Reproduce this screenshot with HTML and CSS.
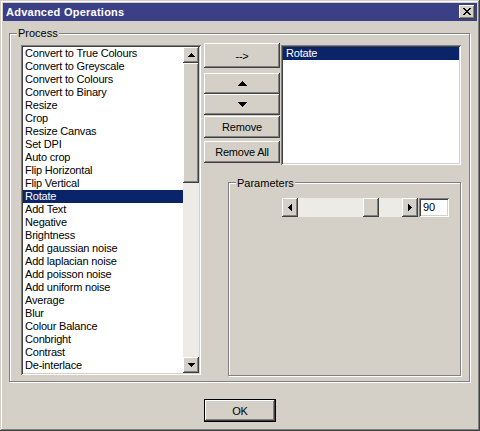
FILE: index.html
```html
<!DOCTYPE html>
<html>
<head>
<meta charset="utf-8">
<link rel="stylesheet" href="styles.css">
</head>
<body>
<div class="window">
  <div class="titlebar">
    <span class="title">Advanced Operations</span>
    <div class="close raised">
      <svg width="8" height="7" viewBox="0 0 8 7" shape-rendering="crispEdges">
        <rect x="0" y="0" width="2" height="1"/><rect x="6" y="0" width="2" height="1"/>
        <rect x="1" y="1" width="2" height="1"/><rect x="5" y="1" width="2" height="1"/>
        <rect x="2" y="2" width="4" height="1"/>
        <rect x="3" y="3" width="2" height="1"/>
        <rect x="2" y="4" width="4" height="1"/>
        <rect x="1" y="5" width="2" height="1"/><rect x="5" y="5" width="2" height="1"/>
        <rect x="0" y="6" width="2" height="1"/><rect x="6" y="6" width="2" height="1"/>
      </svg>
    </div>
  </div>

  <div class="group process">
    <span class="legend">Process</span>
    <div class="process-inner">
      <div class="sunken left-list">
        <ul class="items">
          <li>Convert to True Colours</li>
          <li>Convert to Greyscale</li>
          <li>Convert to Colours</li>
          <li>Convert to Binary</li>
          <li>Resize</li>
          <li>Crop</li>
          <li>Resize Canvas</li>
          <li>Set DPI</li>
          <li>Auto crop</li>
          <li>Flip Horizontal</li>
          <li>Flip Vertical</li>
          <li class="selected">Rotate</li>
          <li>Add Text</li>
          <li>Negative</li>
          <li>Brightness</li>
          <li>Add gaussian noise</li>
          <li>Add laplacian noise</li>
          <li>Add poisson noise</li>
          <li>Add uniform noise</li>
          <li>Average</li>
          <li>Blur</li>
          <li>Colour Balance</li>
          <li>Conbright</li>
          <li>Contrast</li>
          <li>De-interlace</li>
        </ul>
        <div class="vscroll">
          <div class="sbtn raised">
            <svg width="7" height="4" viewBox="0 0 7 4" shape-rendering="crispEdges"><polygon points="3.5,0 7,4 0,4"/></svg>
          </div>
          <div class="vtrack">
            <div class="vthumb raised"></div>
          </div>
          <div class="sbtn raised">
            <svg width="7" height="4" viewBox="0 0 7 4" shape-rendering="crispEdges"><polygon points="0,0 7,0 3.5,4"/></svg>
          </div>
        </div>
      </div>

      <div class="right-area">
        <div class="top-row">
          <div class="btn-col">
            <div class="btn raised b-add">--&gt;</div>
            <div class="btn raised b-up">
              <svg width="9" height="5" viewBox="0 0 9 5" shape-rendering="crispEdges"><polygon points="4.5,0 9,5 0,5"/></svg>
            </div>
            <div class="btn raised b-down">
              <svg width="9" height="5" viewBox="0 0 9 5" shape-rendering="crispEdges"><polygon points="0,0 9,0 4.5,5"/></svg>
            </div>
            <div class="btn raised b-remove">Remove</div>
            <div class="btn raised b-removeall">Remove All</div>
          </div>
          <div class="sunken right-list">
            <ul class="items">
              <li class="selected">Rotate</li>
            </ul>
          </div>
        </div>

        <div class="group params">
          <span class="legend">Parameters</span>
          <div class="params-inner">
            <div class="hscroll">
              <div class="sbtn raised">
                <svg width="4" height="7" viewBox="0 0 4 7" shape-rendering="crispEdges"><polygon points="0,3.5 4,0 4,7"/></svg>
              </div>
              <div class="htrack">
                <div class="hthumb raised" style="margin-left:65px"></div>
              </div>
              <div class="sbtn raised">
                <svg width="4" height="7" viewBox="0 0 4 7" shape-rendering="crispEdges"><polygon points="0,0 4,3.5 0,7"/></svg>
              </div>
            </div>
            <div class="sunken edit">90</div>
          </div>
        </div>
      </div>
    </div>
  </div>

  <div class="footer">
    <div class="ok">
      <div class="btn raised ok-face">OK</div>
    </div>
  </div>
</div>
</body>
</html>
```

FILE: styles.css
```css
* { box-sizing: border-box; }

html, body {
  margin: 0;
  padding: 0;
}

body {
  background: #d4d0c8;
  font-family: "Liberation Sans", Arial, sans-serif;
  font-size: 11px;
  color: #000;
}

.window {
  width: 480px;
  height: 431px;
  padding: 3px;
  background: #d4d0c8;
  display: flex;
  flex-direction: column;
  box-shadow: inset -1px -1px 0 #404040, inset 1px 1px 0 #d4d0c8,
              inset -2px -2px 0 #808080, inset 2px 2px 0 #fff;
}

.raised {
  background: #d4d0c8;
  box-shadow: inset -1px -1px 0 #404040, inset 1px 1px 0 #fff,
              inset -2px -2px 0 #808080, inset 2px 2px 0 #d4d0c8;
}

.sunken {
  padding: 2px;
  background: #fff;
  box-shadow: inset 1px 1px 0 #808080, inset -1px -1px 0 #fff,
              inset 2px 2px 0 #404040, inset -2px -2px 0 #d4d0c8;
}

/* Title bar */
.titlebar {
  height: 18px;
  background: #3b3f86;
  display: flex;
  align-items: center;
  justify-content: space-between;
  padding: 0 2px 0 3px;
}

.title {
  color: #fff;
  font-weight: bold;
  letter-spacing: 0.25px;
}

.close {
  width: 16px;
  height: 14px;
  display: flex;
  align-items: center;
  justify-content: center;
  padding-bottom: 1px;
}

.close svg { fill: #000; }

/* Group boxes */
.group {
  position: relative;
  border: 1px solid #808080;
  box-shadow: inset 1px 1px 0 #fff, 1px 1px 0 #fff;
}

.legend {
  position: absolute;
  left: 7px;
  top: -7px;
  padding: 0 1px;
  line-height: 13px;
  background: #d4d0c8;
}

.process {
  margin: 12px 7px 0 6px;
  height: 349px;
}

.process-inner {
  display: flex;
  align-items: flex-start;
  padding: 9px 0 0 11px;
}

/* List boxes */
.items {
  list-style: none;
  margin: 0;
  padding: 0;
  flex: 1;
  overflow: hidden;
}

.items li {
  height: 13px;
  line-height: 13px;
  padding-left: 2px;
  white-space: nowrap;
  letter-spacing: -0.2px;
}

.items li.selected {
  background: #0a246a;
  color: #fff;
}

.left-list {
  width: 180px;
  height: 330px;
  margin-top: 2px;
  display: flex;
}

.vscroll {
  width: 16px;
  display: flex;
  flex-direction: column;
}

.sbtn {
  width: 16px;
  height: 16px;
  flex: none;
  display: flex;
  align-items: center;
  justify-content: center;
}

.sbtn svg, .btn svg { fill: #000; }

.vtrack {
  flex: 1;
  background: #ecebe5;
}

.vthumb {
  height: 120px;
}

/* Right area */
.right-area {
  margin-left: 3px;
  width: 257px;
}

.top-row {
  display: flex;
  align-items: flex-start;
}

.btn-col {
  width: 76px;
  display: flex;
  flex-direction: column;
}

.btn {
  display: flex;
  align-items: center;
  justify-content: center;
  letter-spacing: -0.2px;
}

.b-add { height: 25px; }
.b-up { height: 21px; margin-top: 5px; }
.b-down { height: 21px; }
.b-remove { height: 22px; margin-top: 1px; }
.b-removeall { height: 22px; margin-top: 3px; }

.right-list {
  width: 180px;
  height: 120px;
  margin: 2px 0 0 1px;
  display: flex;
}

.right-list .items li { padding-left: 3px; }

/* Parameters */
.params {
  margin: 17px 0 0 24px;
  width: 233px;
  height: 194px;
}

.params .legend { top: -6px; }

.params-inner {
  display: flex;
  align-items: flex-start;
  padding: 15px 0 0 53px;
}

.hscroll {
  width: 136px;
  height: 19px;
  display: flex;
}

.hscroll .sbtn { height: 19px; }

.htrack {
  flex: 1;
  background: #ecebe5;
  display: flex;
}

.hthumb {
  width: 16px;
  height: 19px;
}

.edit {
  margin-left: 1px;
  width: 30px;
  height: 19px;
  padding: 2px 0 0 4px;
  line-height: 14px;
}

/* Footer */
.footer {
  display: flex;
  justify-content: center;
  padding-top: 17px;
}

.ok {
  width: 72px;
  height: 23px;
  border: 1px solid #000;
}

.ok-face {
  height: 100%;
}
```
